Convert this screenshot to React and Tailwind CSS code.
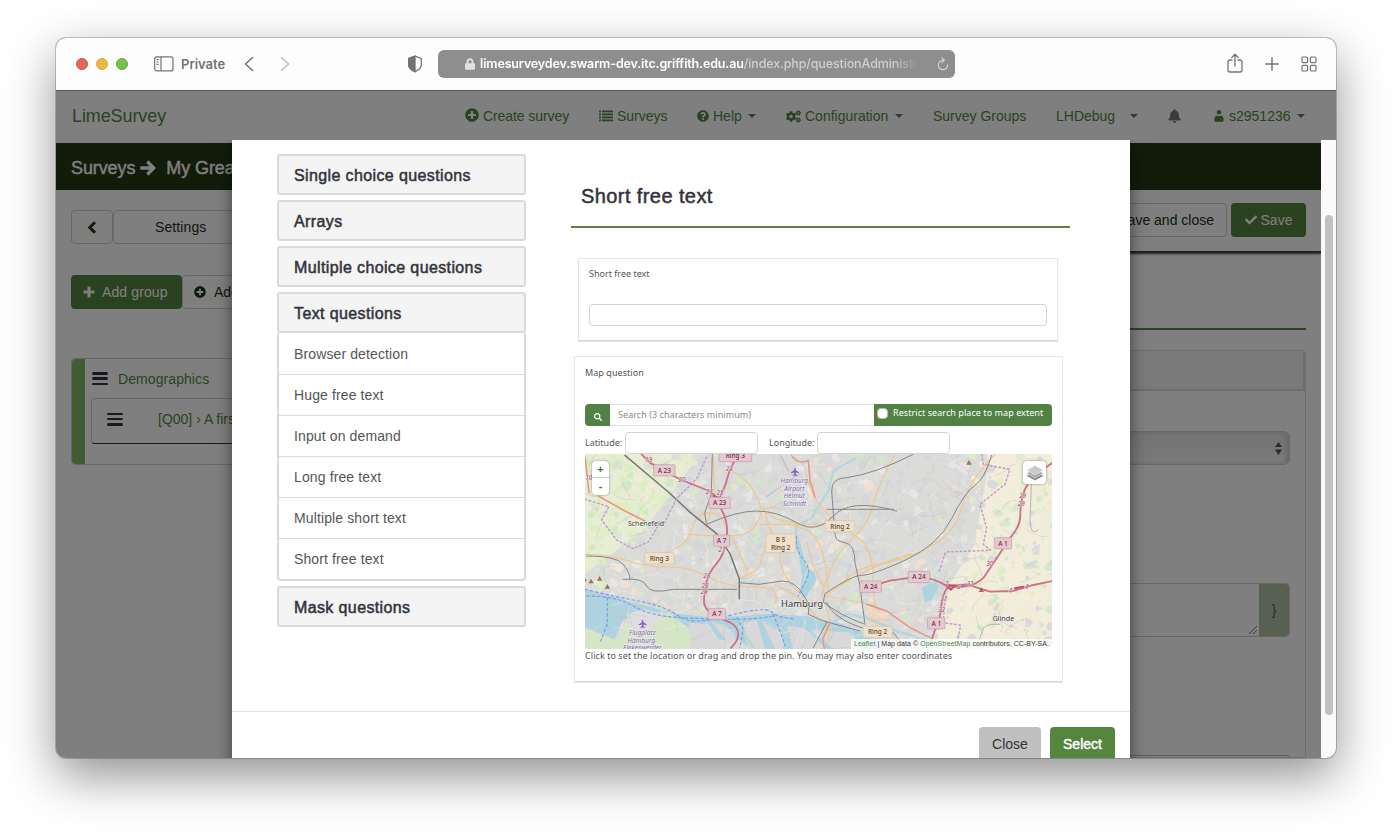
import React from "react";
import {
  FaPlusCircle, FaQuestionCircle, FaCogs, FaBell, FaCheck, FaSearch, FaLock,
} from "react-icons/fa";

const Caret = ({ className = "" }) => (
  <span className={"inline-block h-0 w-0 border-x-4 border-t-4 border-x-transparent border-t-current " + className} />
);

function ListIcon() {
  return (
    <svg viewBox="0 0 14 12" className="h-3 w-3.5" fill="currentColor">
      {[0.5, 3.5, 6.5, 9.5].map((y) => (
        <g key={y}>
          <rect x="0" y={y} width="2" height="1.8" />
          <rect x="3" y={y} width="11" height="1.8" />
        </g>
      ))}
    </svg>
  );
}

function UserIcon() {
  return (
    <svg viewBox="0 0 10 12" className="h-3 w-2.5" fill="currentColor">
      <circle cx="5" cy="2.3" r="2.2" />
      <path d="M0.3 10C0.3 7.400 1.400 5.900 3 5.500c1.200.7 2.800.7 4 0 1.600.4 2.700 1.900 2.700 4.500 0 1.200-.7 1.800-1.600 1.800H1.900c-.9 0-1.600-.6-1.600-1.800z" />
    </svg>
  );
}

const ArrowIcon = () => (
  <svg viewBox="0 0 16 16" className="ml-[5px] mr-[10px] h-4 w-4" fill="none" stroke="currentColor" strokeWidth="3.400">
    <path d="M.3 8h13M7.300 1.500 13.700 8l-6.400 6.500" />
  </svg>
);

const ChevronIcon = () => (
  <svg viewBox="0 0 10 13" className="h-[13px] w-2.5" fill="none" stroke="currentColor" strokeWidth="3">
    <path d="M8 1.200 2.800 6.500 8 11.800" />
  </svg>
);

const PlusIcon = () => (
  <svg viewBox="0 0 12 12" className="mr-[7px] h-3 w-3" fill="none" stroke="currentColor" strokeWidth="3">
    <path d="M6 .5v11M.5 6h11" />
  </svg>
);

const Bars = () => (
  <span className="flex h-[13px] w-4 flex-col justify-between">
    <span className="h-[2.5px] rounded-sm bg-[#33333f]" />
    <span className="h-[2.5px] rounded-sm bg-[#33333f]" />
    <span className="h-[2.5px] rounded-sm bg-[#33333f]" />
  </span>
);

function Toolbar() {
  return (
    <div className="flex h-[53px] shrink-0 items-center border-b border-[#5a5a5a] bg-[#fdfdfd] pl-5 text-[#737373]">
      <div className="flex w-[78px] gap-2">
        <span className="h-3 w-3 rounded-full border border-[#d0574a] bg-[#e0675a]" />
        <span className="h-3 w-3 rounded-full border border-[#dba53a] bg-[#ebb844]" />
        <span className="h-3 w-3 rounded-full border border-[#62ab3e] bg-[#74c24a]" />
      </div>
      <svg viewBox="0 0 20 16" className="h-4 w-5" fill="none" stroke="currentColor" strokeWidth="1.2">
        <rect x=".7" y=".9" width="18.300" height="14" rx="2" />
        <path d="M7 1v14M2.600 3.700h2M2.600 6h2M2.600 8.300h2" />
      </svg>
      <span className="ml-[7px] w-[63px] pt-px font-[Inter] text-[13px] font-semibold">Private</span>
      <svg viewBox="0 0 10 16" className="h-4 w-2.5" fill="none" stroke="currentColor" strokeWidth="1.500" strokeLinecap="round" strokeLinejoin="round">
        <path d="M8.500 1.500 1.500 8l7 6.500" />
      </svg>
      <svg viewBox="0 0 10 16" className="ml-[26px] h-4 w-2.5 text-[#bdbdbd]" fill="none" stroke="currentColor" strokeWidth="1.500" strokeLinecap="round" strokeLinejoin="round">
        <path d="m1.500 1.500 7 6.500-7 6.500" />
      </svg>
      <svg viewBox="0 0 16 18" className="ml-[117px] h-[18px] w-4" fill="none" stroke="currentColor" strokeWidth="1.300">
        <path d="M8 1.200 14.300 3.500v6c0 3.500-3 5.800-6.300 7.200-3.300-1.400-6.300-3.700-6.300-7.200v-6z" />
        <path d="M8 1.200 1.700 3.500v6c0 3.500 3 5.800 6.300 7.200z" fill="currentColor" />
      </svg>
      <div className="ml-[15px] flex h-7 w-[517px] items-center rounded-md bg-[#8e8e8e] font-[Inter] text-[12.500px] text-white">
        <FaLock className="ml-[27px] h-3 w-[10px] text-[#e2e2e2]" />
        <div className="ml-[5px] w-[444px] overflow-hidden whitespace-nowrap pt-px [mask-image:linear-gradient(to_right,black_93%,transparent_99%)]">
          <span className="font-semibold tracking-[-0.140px]">limesurveydev.swarm-dev.itc.griffith.edu.au</span>
          <span className="font-medium tracking-[-0.130px] text-[#cfcfcf]">/index.php/questionAdministration</span>
        </div>
        <svg viewBox="0 0 12 14" className="ml-[13px] h-3.5 w-3" fill="none" stroke="#d8d8d8" strokeWidth="1.100" strokeLinecap="round">
          <path d="M6.500 3.300A4.700 4.700 0 1 0 10.700 8M4.800.8l2.500 2.500L4.800 5.600" />
        </svg>
      </div>
      <svg viewBox="0 0 16 20" className="ml-[272px] h-5 w-4 -mt-[2px]" fill="none" stroke="currentColor" strokeWidth="1.300" strokeLinecap="round" strokeLinejoin="round">
        <path d="M5 7H3a2 2 0 0 0-2 2v8a2 2 0 0 0 2 2h10a2 2 0 0 0 2-2V9a2 2 0 0 0-2-2h-2M8 13V1.500M4.800 4.500 8 1.300l3.200 3.200" />
      </svg>
      <svg viewBox="0 0 14 14" className="ml-[22px] -mt-px h-3.5 w-3.5" fill="none" stroke="currentColor" strokeWidth="1.400" strokeLinecap="round">
        <path d="M7 .7v12.600M.7 7h12.600" />
      </svg>
      <svg viewBox="0 0 16 16" className="ml-[22px] -mt-px h-4 w-4" fill="none" stroke="currentColor" strokeWidth="1.200">
        <rect x="1" y="1" width="5.600" height="5.600" rx="1" />
        <rect x="9.400" y="1" width="5.600" height="5.600" rx="1" />
        <rect x="1" y="9.400" width="5.600" height="5.600" rx="1" />
        <rect x="9.400" y="9.400" width="5.600" height="5.600" rx="1" />
      </svg>
    </div>
  );
}

function Navbar() {
  return (
    <nav className="flex h-[52px] shrink-0 items-center bg-white pb-[2px] pl-4 text-sm text-[#548540]">
      <span className="w-[393px] text-lg tracking-[-0.100px]">LimeSurvey</span>
      <span className="flex w-[134px] items-center gap-1 tracking-[-0.080px]"><FaPlusCircle className="h-3.5 w-3.5 -mt-0.5" />Create survey</span>
      <span className="flex w-[98px] items-center gap-1"><ListIcon />Surveys</span>
      <span className="flex w-[89px] items-center"><FaQuestionCircle className="mr-1 h-3 w-3" />Help<Caret className="ml-[6px]" /></span>
      <span className="flex w-[147px] items-center"><FaCogs className="mr-1 h-[15px] w-[15px]" />Configuration<Caret className="ml-[7px]" /></span>
      <span className="w-[123px]">Survey Groups</span>
      <span className="flex w-[112px] items-center">LHDebug<Caret className="ml-[15px]" /></span>
      <span className="w-[46px] text-[#777]"><FaBell className="h-3.5 w-[13px]" /></span>
      <span className="flex items-center"><UserIcon /><span className="ml-[5px]">s2951236</span><Caret className="ml-[6px]" /></span>
    </nav>
  );
}

function Sidebar() {
  return (
    <aside className="flex w-[200px] shrink-0 flex-col overflow-hidden pl-[15px] pt-5 text-sm whitespace-nowrap">
      <div className="flex text-[#193010]">
        <div className="flex h-[34px] w-[42px] shrink-0 items-center justify-center rounded border border-[#cfcfcf]"><ChevronIcon /></div>
        <div className="flex h-[34px] w-[160px] shrink-0 items-center rounded border border-[#cfcfcf] pl-[41px] tracking-[0.100px]">Settings</div>
      </div>
      <div className="mt-[31px] flex">
        <div className="flex h-[34px] w-[111px] shrink-0 items-center rounded bg-[#568540] pl-3 tracking-[0.120px] text-white"><PlusIcon />Add group</div>
        <div className="flex h-[34px] w-[140px] shrink-0 items-center rounded border border-[#cfcfcf] pl-[11px] text-[#193010]"><FaPlusCircle className="mr-2 h-3 w-3" />Add question</div>
      </div>
      <div className="mt-[49px] flex h-[107px] w-[300px] rounded border border-[#cfcfcf] text-[#568540]">
        <span className="w-[13px] shrink-0 rounded-l-sm bg-[#84bb64]" />
        <div className="flex flex-1 flex-col pl-[6px]">
          <div className="flex h-[39px] items-center pl-px"><Bars /><span className="ml-[10px] tracking-[0.080px]">Demographics</span></div>
          <div className="flex h-[46px] items-center rounded border border-[#cfcfcf] border-b-[#33333f] pb-1 pl-[15px]"><Bars /><span className="ml-[35px]">[Q00] › A first question</span></div>
        </div>
      </div>
    </aside>
  );
}

function Editor() {
  return (
    <main className="flex min-w-0 flex-1 flex-col text-sm">
      <div className="flex h-[63px] shrink-0 items-start justify-end gap-1 border-b-2 border-[#44454c] pr-[15px] pt-[13px] shadow-[0_1px_2px_#44454c]">
        <div className="flex h-[34px] items-center rounded border border-[#cfcfcf] px-3 text-[#193010]">Save and close</div>
        <div className="flex h-[34px] w-[75px] items-center justify-center gap-1 rounded bg-[#568540] text-white"><FaCheck className="h-3 w-3" />Save</div>
      </div>
      <div className="mr-[15px] mt-[75px] h-0.5 shrink-0 bg-[#568540]" />
      <section className="mr-[15px] mt-5 flex flex-1 flex-col overflow-hidden rounded-t border border-[#dcdcdc]">
        <div className="h-10 shrink-0 border-2 border-l-0 border-t-0 border-[#d8d8d8] bg-[#f4f4f4]" />
        <div className="flex flex-1 flex-col pr-[15px] pt-10">
          <div className="flex h-[34px] shrink-0 items-center justify-end rounded-md border border-[#cfcfcf] bg-linear-to-b from-[#e5e5e5] to-[#f6f6f6] pr-[7px] text-[#55555c] shadow-[inset_-3px_0_4px_#d0d0d0]">
            <svg viewBox="0 0 7 13" className="h-[13px] w-[7px]" fill="currentColor"><path d="M3.500 0 7 5H0zM3.500 13 7 7.500H0z" /></svg>
          </div>
          <div className="mt-[118px] flex h-[54px] shrink-0 rounded border border-[#cfcfcf]">
            <div className="flex flex-1 items-end justify-end p-0.5">
              <svg viewBox="0 0 8 8" className="h-2 w-2" stroke="#444" strokeWidth=".7"><path d="M0 8 8 0M4 8l4-4" /></svg>
            </div>
            <div className="flex w-[30px] items-center justify-center rounded-r bg-[#b0c0a5] text-[#555]">{"}"}</div>
          </div>
          <div className="mt-[118px] h-8 rounded-t border border-[#bdbdbd]" />
        </div>
      </section>
    </main>
  );
}

/* ---- street map ---- */
function seeded(seed) {
  let s = seed;
  return () => {
    s = (s * 16807) % 2147483647;
    return s / 2147483647;
  };
}

const rnd = seeded(4217);
const patches = [];
for (let i = 0; i < 1500; i++) {
  const x = rnd() * 467;
  const y = rnd() * 195;
  const r = 1 + rnd() * 4.5;
  const west = x + y * 0.7 < 115;
  const east = x > 385 || (x > 340 && y > 150);
  const k = rnd();
  let fill;
  if (west) fill = k < 0.45 ? "#dcedc0" : k < 0.7 ? "#f4ead6" : k < 0.88 ? "#dddddd" : "#cde6c0";
  else if (east) fill = k < 0.5 ? "#f8ebd9" : k < 0.68 ? "#d6d6d7" : k < 0.88 ? "#e0ecc6" : "#d0e6c8";
  else fill = k < 0.62 ? "#d6d6d7" : k < 0.76 ? "#d3e6c9" : k < 0.93 ? "#e9e8e5" : "#f2e0d0";
  const pts = [];
  for (let j = 0; j < 6; j++) {
    const a = (j / 6) * Math.PI * 2;
    const q = r * (0.4 + rnd() * 0.9);
    pts.push((x + Math.cos(a) * q).toFixed(1) + "," + (y + Math.sin(a) * q).toFixed(1));
  }
  patches.push({ fill, pts: pts.join(" ") });
}
const lanes = [];
for (let i = 0; i < 330; i++) {
  let x = rnd() * 467;
  let y = rnd() * 195;
  let a = rnd() * 6.28;
  let d = `M${x.toFixed(1)} ${y.toFixed(1)}`;
  for (let j = 0; j < 4; j++) {
    a += (rnd() - 0.5) * 0.9;
    x += Math.cos(a) * 6;
    y += Math.sin(a) * 6;
    d += `L${x.toFixed(1)} ${y.toFixed(1)}`;
  }
  lanes.push({ d, stroke: i % 3 ? "#f2f2f0" : "#bcbcbe" });
}

const Shield = ({ x, y, w, h = 34, t, t2, tan }) => (
  <g>
    <rect x={x - w / 2} y={y - h / 2} width={w} height={h} rx="3" fill={tan ? "#efe0cb" : "#e6c8d1"} stroke={tan ? "#d6c3a4" : "#c39aa8"} strokeWidth="2" />
    <text x={x} y={t2 ? y - 4 : y + 7} textAnchor="middle" fontSize="19.500" fontWeight="500" fill={tan ? "#5b4a32" : "#6d2f45"}>{t}</text>
    {t2 && <text x={x} y={y + 20} textAnchor="middle" fontSize="19.500" fontWeight="500" fill="#5b4a32">{t2}</text>}
  </g>
);

const Exit = ({ x, y, children }) => (
  <text x={x} y={y + 7} textAnchor="middle" fontSize="19" fontStyle="italic" fill="#a04058" stroke="#eee" strokeWidth="2" paintOrder="stroke">{children}</text>
);

const Plane = ({ x, y }) => (
  <path transform={`translate(${x} ${y})`} d="M0-12c2 0 2.500 3 2.500 8l9 6v3l-9-2.500V8l4 3v2L0 11.500-6.500 13v-2l4-3V2.500l-9 2.500V2l9-6c0-5 .5-8 2.500-8z" fill="#8461c4" />
);

function StreetMap() {
  return (
    <svg viewBox="0 0 467 195" className="block h-[195px] w-[467px]" fontFamily="Noto Sans, sans-serif">
      <rect width="467" height="195" fill="#dbdbda" />
      <path d="M0 0h115L60 75 0 120z" fill="#e6edd2" />
      <path d="M405 0h62v195H350l15-65 25-40z" fill="#f1eddb" />
      {patches.map((p, i) => <polygon key={i} points={p.pts} fill={p.fill} opacity=".85" />)}
      <g transform="translate(-5 -58) scale(.3333)" fill="none">
        <path d="M0 575l110 30 110 30 80 20 90 8 90-2 80-8 120 8 100 20 90 40 60 45H520l-40-35H350l-120-50-50-20-50 10-35 75H70L0 700z" fill="#aed3df" />
        <path d="M0 690l60 22 50 20 40-60 30-25 90 5 55 45 30 65H0z" fill="#d5e6c6" />
        <path d="M135 655l60-15 60 18-50 45-50-8z" fill="#e0dde0" />
        <path d="M325 680l60 5 50 74h-100zM395 678l40 10 30 30-5 41zM490 680l40-8 25 87h-50zM545 675l60 20 5 64h-25zM620 690l50 5 70 64H640zM690 700l120 10 40 49h-90z" fill="#d8d8da" />
        <path d="M640 425l14-5 15 50 8 40 28 20 3 25-28 48-12 3-8-26 6-40-8-55z" fill="#aed3df" />
        <path d="M1025 575l40-22 12 20-22 38-20 6z" fill="#aed3df" />
        <path d="M860 630l60 20-5 60-55-30z" fill="#f0d6c3" />
        <path d="M830 185l-70 40-15 60-50 80-45 25-8 50" stroke="#b5d6dd" strokeWidth="7" />
        <path d="M740 690l60-35 60 10 90 40 130 40M480 690l40 66M560 680l70 40" stroke="#b5d6dd" strokeWidth="9" />
        <path d="M560 302l100-70M600 175l25 50" stroke="#c4c2ca" strokeWidth="5" />
      </g>
      {lanes.map((l, i) => <path key={i} d={l.d} fill="none" stroke={l.stroke} strokeWidth=".6" opacity=".65" />)}
      <g transform="translate(-5 -58) scale(.3333)" fill="none" strokeLinejoin="round" strokeLinecap="round">
        <path d="M15 475q70 0 130 20t120 18 120 30 140 30 60 50M260 470q60-20 75-70t50-50q40 0 50 40M330 415q60 5 110 5t70-15 30-45 50-25M455 225q60 30 80 90t120 65M455 420q25 60 50 105M560 440l-25 80-50 25M600 465q-5 40 20 80t40 45M555 350l20 60 40 20M540 385h190M640 390q60 10 80 60t25 130M680 240q20 80 70 120t90 70 40 130 25 80M945 175q-50 90-65 150t-60 100-70 100-25 80M1245 175q-80 80-100 160t-100 120-150 50-110 60M735 600q80-60 180-100t80-20M600 575q50 20 70 45t80 80M740 600q60 10 150 30M730 570l-30-60-20-70M730 610l20 60-5 70M400 180l5 130-30 90" stroke="#efc68d" strokeWidth="3.500" />
        <path d="M135 178l130 110 70 65 75 60 40 60 28 75v60" stroke="#777" strokeWidth="4.500" />
        <path d="M397 175l-3 120-20 55 5 30M380 385q90-40 150-40t120 35 110-20 190-15M477 560l60 5 70-10q40 0 65 45l15 25-2 30 45 20 110 30M130 550q60-5 70 20t80 10h190M20 480q90 0 110 25t20 45M1235 178q-20 70-50 90t-70 100-140 125-130 45-110 55l-5 25q50 40 120 65M1000 175q-120 60-200 70-45 0-45 40l10 130q0 20 30 25t30 60l15 70 15 115M740 340h200M740 680l-40 75M740 620q20 50 120 80l80 10 40 50" stroke="#868686" strokeWidth="3" />
        <path d="M15 180l12 110M55 300l80 45 60 30M635 178q20 30 50 15l5 60 15 50M860 625l60 20 70 50 60 30M750 680l-22 50 5 30" stroke="#e7967e" strokeWidth="4.500" />
        <path d="M15 310l72 22-22 40 45 60 50 26 45-20 30-50 20-10 35-70 60-60 32-70M1205 175l5 30 80 15-15 45-75 60 20 70-10 50 22 18-135 5-20 60M1095 610l-5 70 52 8-12 60" stroke="#bd9fc8" strokeWidth="4.500" strokeDasharray="5 8" />
        <path d="M15 580q80 20 160 35t120 45 150 0 130-12 65 20M20 600q90 0 140 30t140 35 160 5 120-10M82 605v80l-20 50M650 420q-5 40 20 70t10 60-25 50M470 665l20 35-10 55M580 655l20 50 15 45" stroke="#7d9be6" strokeWidth="3.500" strokeDasharray="8 8" />
        <path d="M1120 570h-20M1355 252l-5 120q0 50 25 30M1190 757l20-60q10-15 50-12" stroke="#b5b5b5" strokeWidth="3" />
        <path d="M185 175l25 25 50 30 45 22 75 30q25 10 30 30l20 40q15 30 10 75t-30 75-30 55q-8 40-8 60t28 42l50 20q25 15 25 35 0 20-22 42M475 175l-25 45-15 50-20 45M850 578l80-24 85-12q50 5 85 28l60-5 70 22 70-2 60-18 58-12M1418 200q-60 40-75 65-22 35-22 95 0 30-30 65l-80 120q-20 20-50 25t-55 0q-20 25-22 60t-20 75l-14 42" stroke="#cf6f8a" strokeWidth="5.500" />
        <path d="M1095 567l30 2-12 12zM1305 577l25-5M400 300l15 5" stroke="#c84f70" strokeWidth="6" />

        <g fill="#8a5a2a" stroke="none" opacity=".8"><path d="M33 548l8 14H25zM59 540l8 14H51zM82 564l8 14H74zM15 546l6 10h-6zM1167 192l8 14h-16zM1204 574l8 14h-16z" /></g>
      </g>
      <g transform="translate(-5 -58) scale(.3333)">
        <Shield x={466} y={180} w={98} t="Ring 3" />
        <Shield x={253} y={223} w={64} t="A 23" />
        <Shield x={419} y={321} w={64} t="A 23" />
        <Shield x={425} y={434} w={48} t="A 7" />
        <Shield x={411} y={654} w={52} t="A 7" />
        <Shield x={238} y={487} w={88} t="Ring 3" tan />
        <Shield x={602} y={442} w={88} h={56} t="B 5" t2="Ring 2" tan />
        <Shield x={780} y={391} w={88} t="Ring 2" tan />
        <Shield x={893} y={708} w={88} t="Ring 2" tan />
        <Shield x={1017} y={543} w={64} t="A 24" />
        <Shield x={872} y={572} w={64} t="A 24" />
        <Shield x={1269} y={442} w={52} t="A 1" />
        <Shield x={1069} y={682} w={52} t="A 1" />
        <Exit x={206} y={192}>19</Exit><Exit x={306} y={251}>20</Exit><Exit x={448} y={219}>24</Exit>
        <Exit x={388} y={286}>27</Exit><Exit x={420} y={290}>25</Exit><Exit x={426} y={461}>27</Exit>
        <Exit x={380} y={538}>28</Exit><Exit x={375} y={568}>28</Exit><Exit x={372} y={588}>29</Exit><Exit x={26} y={244}>10</Exit>
        <Exit x={1328} y={299}>29</Exit><Exit x={1324} y={322}>29</Exit><Exit x={1229} y={503}>30</Exit>
        <Exit x={1171} y={563}>31</Exit><Exit x={1100} y={563}>2</Exit><Exit x={1137} y={571}>2</Exit>
        <Exit x={1092} y={609}>31</Exit><Exit x={1085} y={641}>32</Exit><Exit x={1292} y={585}>4</Exit><Exit x={1340} y={573}>4</Exit>
        <g stroke="#f0f0ee" strokeWidth="3" paintOrder="stroke" textAnchor="middle">
          <text x="198" y="391" fontSize="21" fill="#444">Schenefeld</text>
          <text x="666" y="633" fontSize="28" fill="#333">Hamburg</text>
          <text x="1270" y="674" fontSize="21.500" fill="#444">Glinde</text>
          <g fontSize="19.500" fontStyle="italic" fill="#7c64b0">
            <text x="643" y="260">Hamburg</text><text x="643" y="284">Airport</text><text x="643" y="307">Helmut</text><text x="643" y="331">Schmidt</text>
            <text x="187" y="716">Flugplatz</text><text x="187" y="740">Hamburg-</text><text x="187" y="763">Finkenwerder</text>
          </g>
        </g>
        <Plane x={645} y={227} /><Plane x={188} y={683} />
      </g>
    </svg>
  );
}

function QuestionPreview() {
  return (
    <div className="flex w-[499px] flex-col font-['Noto_Sans',sans-serif] text-[9px] leading-3 text-[#555]">
      <h2 className="h-[88px] border-b-2 border-[#568540] pl-[10px] pt-[43px] font-['Liberation_Sans',Arial,sans-serif] text-xl leading-[26px] tracking-[0.410px] text-[#33333c] [-webkit-text-stroke:0.500px_#33333c]">Short free text</h2>
      <div className="ml-[7px] mt-[30px] h-[83px] w-[480px] rounded-[1px] border border-[#e6e6e6] border-b-[#d6d6d6] px-[10px] pt-[9px] shadow-[0_1px_1px_#e4e4e4]">
        <div>Short free text</div>
        <div className="mt-6 h-[22px] rounded-sm border border-[#d4d4d4]" />
      </div>
      <div className="ml-[3px] mt-[15px] flex h-[326px] w-[489px] flex-col rounded-[1px] border border-[#e6e6e6] border-b-[#d6d6d6] pl-[10px] pt-[10px] shadow-[0_1px_1px_#e4e4e4]">
        <div className="tracking-[0.060px]">Map question</div>
        <div className="mt-[25px] flex h-[22px] w-[467px]">
          <div className="flex w-[25px] items-center justify-center rounded-l-sm bg-[#518244] text-white"><FaSearch className="mt-[3px] h-2 w-2" /></div>
          <div className="flex w-[264px] items-center border-y border-[#e0e0e0] pl-2 tracking-[0.060px] text-[#888]">Search (3 characters minimum)</div>
          <div className="flex flex-1 items-start rounded-r-sm bg-[#518244] pl-[3px] pt-[3px] text-white">
            <span className="mt-[1px] h-[11px] w-[11px] rounded-sm border border-[#bbb] bg-white" />
            <span className="ml-[5px] whitespace-nowrap tracking-[0.060px]">Restrict search place to map extent</span>
          </div>
        </div>
        <div className="mt-[6px] flex h-[22px] w-[467px] items-center">
          <span className="w-10">Latitude:</span>
          <span className="h-[22px] w-[133px] rounded-sm border border-[#d4d4d4]" />
          <span className="ml-[11px] w-12">Longitude:</span>
          <span className="h-[22px] w-[133px] rounded-sm border border-[#d4d4d4]" />
        </div>
        <div className="relative h-[195px] w-[467px] overflow-hidden">
          <StreetMap />
          <div className="absolute left-[7px] top-[7px] flex h-[34px] w-[17px] flex-col rounded-sm bg-white text-center text-[11px] font-bold leading-4 text-[#3d7a35] shadow-[0_0_2px_#777]">
            <span className="h-[17px] border-b border-[#ccc]">+</span>
            <span>-</span>
          </div>
          <div className="absolute right-[6px] top-[7px] flex h-[23px] w-[23px] items-center justify-center rounded-sm bg-white shadow-[0_0_3px_#888]">
            <svg viewBox="0 0 18 18" className="h-[18px] w-[18px]">
              <path d="M9 7.500l8.500 4.200L9 16.500.5 11.700z" fill="#8a8a8a" />
              <path d="M9 5l8.500 4.200L9 14 .5 9.200z" fill="#a8a8a8" stroke="#fff" strokeWidth=".5" />
              <path d="M9 1.500l8.500 4.700L9 11 .5 6.200z" fill="#cacaca" stroke="#fff" strokeWidth=".5" />
            </svg>
          </div>
          <div className="absolute bottom-0 right-0 whitespace-nowrap bg-white/75 px-[3px] font-['Liberation_Sans',Arial,sans-serif] text-[7px] leading-[10px] tracking-[0.060px] text-[#333]">
            <span className="text-[#4a8a4a]">Leaflet</span> | Map data © <span className="text-[#4a8a4a]">OpenStreetMap</span> contributors, CC-BY-SA.
          </div>
        </div>
        <div className="mt-px whitespace-nowrap tracking-[0.060px]">Click to set the location or drag and drop the pin. You may may also enter coordinates</div>
      </div>
    </div>
  );
}

const PanelHead = ({ children }) => (
  <div className="flex h-[41px] items-center rounded-[3px] border-2 border-[#dadada] bg-[#f4f4f4] pl-[15px] pt-[2px] text-base tracking-[0.380px] text-[#33333c] [-webkit-text-stroke:0.500px_#33333c]">{children}</div>
);

const textQuestions = ["Browser detection", "Huge free text", "Input on demand", "Long free text", "Multiple short text", "Short free text"];

function Modal() {
  return (
    <div className="flex h-[640px] w-[898px] shrink-0 flex-col bg-white shadow-[0_5px_15px_rgba(0,0,0,0.500)]">
      <div className="flex h-[571px] shrink-0 pl-[45px]">
        <div className="flex w-[249px] flex-col gap-[5px] pt-[14px]">
          <PanelHead>Single choice questions</PanelHead>
          <PanelHead>Arrays</PanelHead>
          <PanelHead>Multiple choice questions</PanelHead>
          <div>
            <PanelHead>Text questions</PanelHead>
            <div className="flex flex-col rounded-b border-2 border-t-0 border-[#dadada] pt-px">
              {textQuestions.map((q, i) => (
                <div key={q} className={"flex items-center border-[#dadada] pl-[15px] text-sm tracking-[0.120px] text-[#555] " + (i < 5 ? "h-[41px] border-b" : "h-10")}>{q}</div>
              ))}
            </div>
          </div>
          <PanelHead>Mask questions</PanelHead>
        </div>
        <div className="ml-[45px]"><QuestionPreview /></div>
      </div>
      <div className="flex flex-1 items-start justify-end gap-[9px] border-t border-[#e5e5e5] pr-[15px] pt-[15px] text-sm">
        <button className="h-[34px] w-[62px] rounded bg-[#c0c0c0] text-[#33333c]">Close</button>
        <button className="h-[34px] w-[65px] rounded bg-[#568540] text-white [-webkit-text-stroke:0.400px_white]">Select</button>
      </div>
    </div>
  );
}

export default function App() {
  return (
    <div className="h-[832px] w-[1392px] overflow-hidden bg-white pl-14 pt-[38px] font-['Liberation_Sans',Arial,sans-serif] antialiased">
      <div className="flex h-[720px] w-[1280px] flex-col overflow-hidden rounded-[10px] bg-[#808080] shadow-[0_0_0_1px_rgba(0,0,0,0.200),0_18px_50px_rgba(0,0,0,0.440)]">
        <Toolbar />
        <div className="relative flex h-[667px] flex-col bg-white">
          <Navbar />
          <div className="mr-[15px] flex h-[47px] shrink-0 items-center whitespace-nowrap bg-[#253817] pl-[15px] pt-[2px] text-lg tracking-[-0.100px] text-white [-webkit-text-stroke:0.400px_white]">
            Surveys<ArrowIcon />My Great Survey
          </div>
          <div className="mr-[15px] flex min-h-0 flex-1 overflow-hidden">
            <Sidebar />
            <Editor />
          </div>
          <div className="absolute inset-0 bg-black/50" />
          <div className="absolute inset-x-0 bottom-0 top-[49px] flex overflow-hidden">
            <div className="ml-[176px]"><Modal /></div>
            <div className="ml-auto w-[15px] bg-[#fafafa] pl-1 pt-[75px]">
              <div className="h-[500px] w-2 rounded-full bg-[#c1c1c1]" />
            </div>
          </div>
        </div>
      </div>
    </div>
  );
}
